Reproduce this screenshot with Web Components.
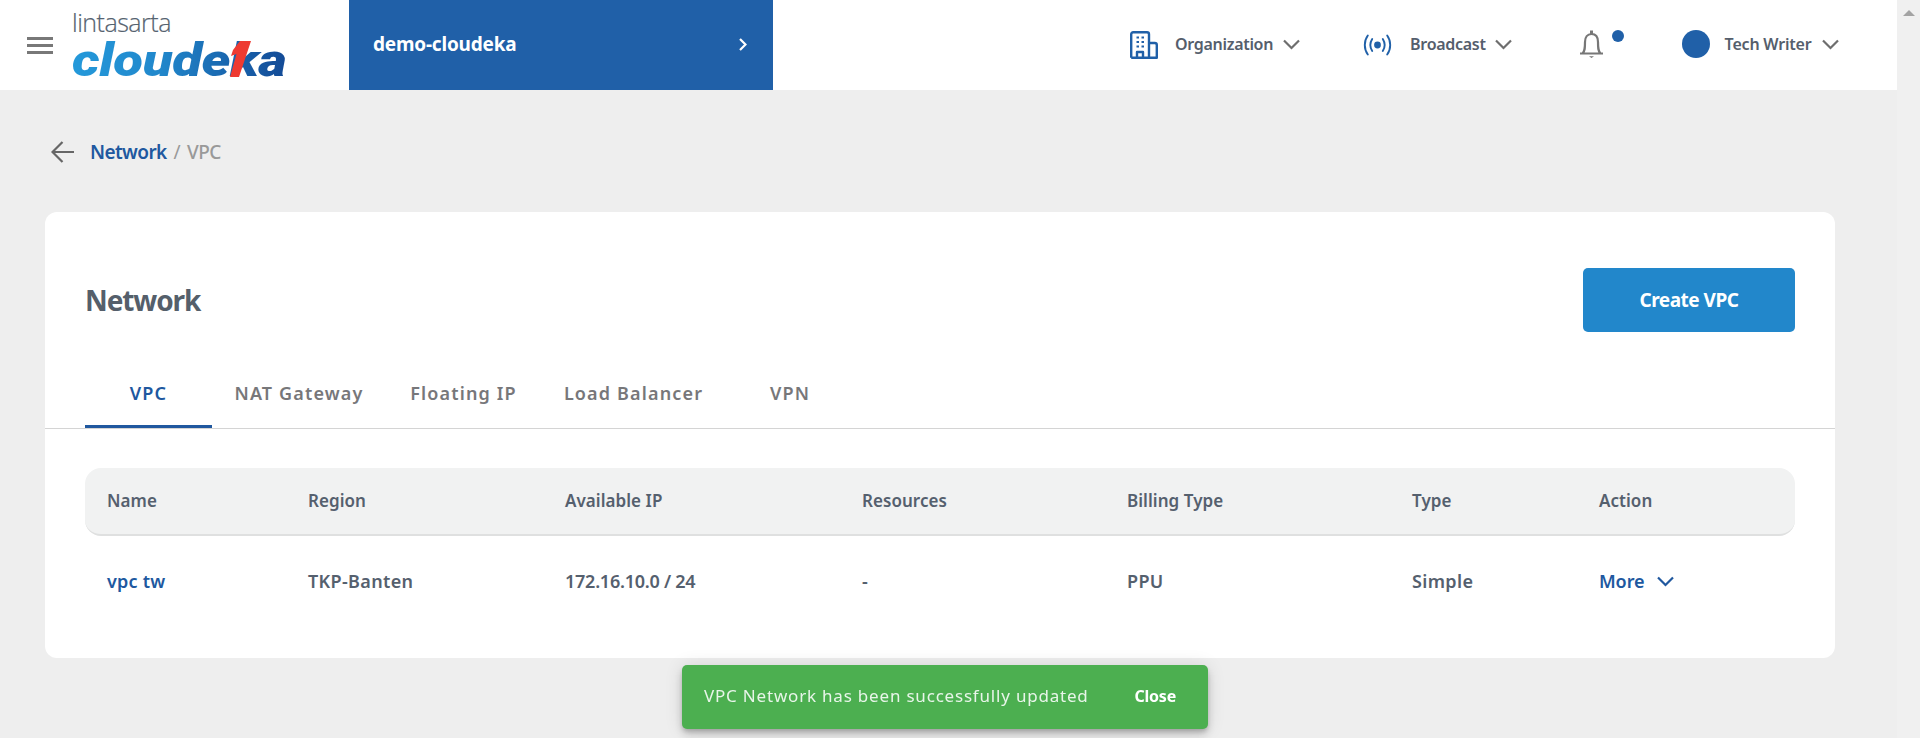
<!DOCTYPE html>
<html>
<head>
<meta charset="utf-8">
<title>Network - VPC</title>
<style>
  html, body { margin: 0; height: 100%; overflow: hidden; background: #eeeeee; }
  body { font-family: "Noto Sans", "Open Sans", sans-serif; color: #556066; }
</style>
</head>
<body>
<app-shell>
  <top-bar></top-bar>
  <bread-crumb></bread-crumb>
  <network-card></network-card>
</app-shell>
<toast-bar>VPC Network has been successfully updated</toast-bar>

<script>
// iconos compartidos
const chevron = (c) => `<svg width="17" height="11" viewBox="0 0 17 11" fill="none" stroke="${c}" stroke-width="2.200"><path d="M1 1.500 8.500 9 16 1.500"/></svg>`;

class AppShell extends HTMLElement {
  constructor() {
    super();
    this.attachShadow({mode: 'open'}).innerHTML = `
      <style>
        :host { display: flex; height: 738px; }
        .page { width: 1897px; flex: none; }
        .bar { flex: 1; background: #f0f0f0; display: flex; justify-content: center; padding-top: 10px; box-sizing: border-box; }
        .up { width: 0; height: 0; border: 6px solid transparent; border-top: 0; border-bottom: 6px solid #a3a3a3; }
      </style>
      <div class="page"><slot></slot></div>
      <div class="bar"><div class="up"></div></div>`;
  }
}

class TopBar extends HTMLElement {
  constructor() {
    super();
    this.attachShadow({mode: 'open'}).innerHTML = `
      <style>
        :host { display: flex; height: 90px; background: #fff; align-items: center; font-family: "Noto Sans", sans-serif; }
        .burger { width: 26px; height: 17px; margin-left: 27px; display: flex; flex-direction: column; justify-content: space-between; }
        .burger i { height: 3px; background: #787878; display: block; }
        .logo { width: 276px; margin-left: 20px; height: 90px; box-sizing: border-box; padding-top: 9px; position: relative; overflow: hidden; }
        .lin { font: 300 25px/26px "Open Sans", sans-serif; color: #55626f; letter-spacing: -0.5px; display: block; margin-left: -1px; -webkit-text-stroke: 0.2px #55626f; }
        .cl { font: italic 900 47px/40px Roboto, sans-serif; letter-spacing: -0.4px; display: block; width: 184px; height: 40px; margin: 5px 0 0 -1px; white-space: nowrap; transform: scaleX(1.165); transform-origin: 0 0;
          background: linear-gradient(90deg, #2499da 0, #2188cc 40%, #134a96 100%); -webkit-background-clip: text; background-clip: text; color: transparent; }
        .one { position: absolute; left: 157px; top: 41px; }
        .project { width: 424px; height: 90px; background: #2060a8; color: #fff; font-weight: 700; font-size: 19px; letter-spacing: -0.2px; display: flex; align-items: center; justify-content: space-between; padding: 0 26px 2px 24px; box-sizing: border-box; }
        .right { flex: 1; display: flex; align-items: center; font-size: 16px; font-weight: 600; color: #555e6c; letter-spacing: -0.3px; }
        .right span { white-space: nowrap; margin-bottom: 2px; }
        .org { margin-left: 357px; display: flex; align-items: center; }
        .cast { margin-left: 63px; display: flex; align-items: center; }
        .bell { margin-left: 67px; display: flex; align-items: flex-start; margin-bottom: 2px; }
        .dot { width: 12px; height: 12px; border-radius: 50%; background: #2060a8; margin-left: 8px; }
        .user { margin-left: 58px; display: flex; align-items: center; }
        .ava { width: 28px; height: 28px; border-radius: 50%; background: #2060a8; margin-bottom: 2px; }
      </style>
      <div class="burger"><i></i><i></i><i></i></div>
      <div class="logo">
        <span class="lin">lintasarta</span>
        <span class="cl">cloudeka</span>
        <svg class="one" width="22" height="36" viewBox="0 0 22 36"><path d="M10 0H21L9 36H0L6.500 13 1 15 3 9Z" fill="#ee3a31"/></svg>
      </div>
      <div class="project"><span>demo-cloudeka</span>
        <svg width="8" height="13" viewBox="0 0 8 13" fill="none" stroke="#fff" stroke-width="2.200"><path d="M1 1 6.500 6.500 1 12"/></svg>
      </div>
      <div class="right">
        <div class="org">
          <svg width="28" height="28" viewBox="0 0 28 28" fill="none" stroke="#2060a8" stroke-width="2.400" stroke-linejoin="round"><path d="M1.200 26.800V3.200a2 2 0 0 1 2-2H17a2 2 0 0 1 2 2V26.800M1.200 26.800H26.800V14a2 2 0 0 0-2-2H19M7 26.800V21H13V26.800"/><path d="M6.500 6.500h2.500M11.500 6.500h2.500M6.500 11h2.500M11.500 11h2.500M6.500 15.500h2.500M11.500 15.500h2.500" stroke-width="2.200"/></svg>
          <span style="margin-left:17px">Organization</span>
          <span style="margin-left:10px;display:flex">${chevron('#6e6e6e')}</span>
        </div>
        <div class="cast">
          <svg width="29" height="22" viewBox="0 0 29 22" fill="none" stroke="#2060a8" stroke-width="1.900" stroke-linecap="round"><circle cx="14.500" cy="11" r="3.400" fill="#2060a8" stroke="none"/><path d="M9.200 5C7 8.500 7 13.500 9.200 17M19.800 5C22 8.500 22 13.500 19.800 17M4.800 1.500C.8 7 .8 15 4.800 20.500M24.200 1.500C28.200 7 28.200 15 24.200 20.500"/></svg>
          <span style="margin-left:18px">Broadcast</span>
          <span style="margin-left:9px;display:flex">${chevron('#6e6e6e')}</span>
        </div>
        <div class="bell">
          <svg width="25" height="28" viewBox="0 0 25 28" fill="none" stroke="#777" stroke-width="2.200"><path d="M1 23.500H24M3.500 23.500C6 21 6 18 6 12 6 7 8.500 4 12.500 4S19 7 19 12C19 18 19 21 21.500 23.500"/><path d="M12.500 .5V4" stroke-width="3"/><path d="M10 26.300H15L12.500 28Z" fill="#777" stroke="none"/></svg>
          <div class="dot"></div>
        </div>
        <div class="user">
          <div class="ava"></div>
          <span style="margin-left:15px;letter-spacing:-0.2px">Tech Writer</span>
          <span style="margin-left:10px;display:flex">${chevron('#6e6e6e')}</span>
        </div>
      </div>`;
  }
}

class BreadCrumb extends HTMLElement {
  constructor() {
    super();
    this.attachShadow({mode: 'open'}).innerHTML = `
      <style>
        :host { display: flex; align-items: center; height: 122px; box-sizing: border-box; padding: 2px 0 0 51px; font: 600 19px "Noto Sans", sans-serif; letter-spacing: -0.6px; }
        a { color: #20589f; margin-left: 16px; }
        .sep { color: #999; font-weight: 400; margin: 0 7px; }
        .cur { color: #999; font-weight: 500; }
      </style>
      <svg width="23" height="22" viewBox="0 0 23 22" fill="none" stroke="#666" stroke-width="2.200"><path d="M23 11H2M11.500 1 1.500 11 11.500 21"/></svg>
      <a>Network</a><span class="sep">/</span><span class="cur">VPC</span>`;
  }
}

class NetworkCard extends HTMLElement {
  constructor() {
    super();
    this.attachShadow({mode: 'open'}).innerHTML = `
      <style>
        :host { display: block; margin-left: 45px; width: 1790px; height: 446px; background: #fff; border-radius: 12px; font-family: "Noto Sans", sans-serif; }
        .head { display: flex; justify-content: space-between; align-items: center; padding: 56px 40px 0; height: 64px; }
        h1 { margin: 0; font-size: 28px; font-weight: 700; color: #555f6b; letter-spacing: -1.100px; }
        button { width: 212px; height: 64px; border: 0; border-radius: 5px; background: #2287cb; color: #fff; font: 700 19px "Noto Sans", sans-serif; letter-spacing: -0.5px; }
        .tabs { display: flex; margin-top: 30px; height: 66px; border-bottom: 1px solid #d4d4d4; padding-left: 40px; }
        .tab { height: 66px; display: flex; align-items: center; justify-content: center; box-sizing: border-box; padding-bottom: 5px; font-size: 18px; font-weight: 600; letter-spacing: 1.150px; color: #77777a; }
        .tab.on { color: #20589f; border-bottom: 3px solid #20589f; padding-bottom: 2px; }
        .rows { padding: 39px 40px 0; }
      </style>
      <div class="head"><h1>Network</h1><button>Create VPC</button></div>
      <div class="tabs">
        <div class="tab on" style="width:127px">VPC</div>
        <div class="tab" style="width:174px">NAT Gateway</div>
        <div class="tab" style="width:155px">Floating IP</div>
        <div class="tab" style="width:185px">Load Balancer</div>
        <div class="tab" style="width:128px">VPN</div>
      </div>
      <div class="rows">
        <vpc-table></vpc-table>
      </div>`;
  }
}

class VpcTable extends HTMLElement {
  constructor() {
    super();
    const cols = 'grid-template-columns: 201px 257px 297px 265px 285px 187px 1fr;';
    this.attachShadow({mode: 'open'}).innerHTML = `
      <style>
        :host { display: block; font: 600 18px "Noto Sans", sans-serif; color: #55606e; letter-spacing: 0.35px; }
        .row { display: grid; ${cols} padding-left: 22px; align-items: center; }
        .hd { height: 68px; background: #f1f2f2; border-radius: 16px; border-bottom: 2px solid #dfe0e0; box-sizing: border-box; font-size: 17px; letter-spacing: 0.05px; padding-bottom: 2px; }
        .bd { height: 90px; }
        .link { color: #20589f; }
        .vpc { letter-spacing: 0.2px; }
        .ip { letter-spacing: -0.25px; }
        .more { display: flex; align-items: center; gap: 13px; letter-spacing: -0.1px; }
      </style>
      <div class="row hd"><span>Name</span><span>Region</span><span>Available IP</span><span>Resources</span><span>Billing Type</span><span>Type</span><span>Action</span></div>
      <div class="row bd"><span class="link vpc">vpc tw</span><span>TKP-Banten</span><span class="ip">172.16.10.0 / 24</span><span>-</span><span>PPU</span><span>Simple</span>
        <span class="more link">More ${chevron('#20589f')}</span></div>`;
  }
}

class ToastBar extends HTMLElement {
  constructor() {
    super();
    this.attachShadow({mode: 'open'}).innerHTML = `
      <style>
        :host { position: fixed; left: 682px; top: 665px; width: 526px; height: 64px; background: #4caf50; border-radius: 5px; box-shadow: 0 3px 5px -1px rgba(0,0,0,.2), 0 6px 10px 0 rgba(0,0,0,.14), 0 1px 18px 0 rgba(0,0,0,.12); display: flex; align-items: center; justify-content: space-between; padding: 0 32px 2px 22px; box-sizing: border-box; color: #e8f5e9; font: 400 17px "Noto Sans", sans-serif; letter-spacing: 0.8px; }
        span { padding-bottom: 2px; }
        b { color: #fff; font-weight: 700; font-size: 16px; letter-spacing: -0.2px; }
      </style>
      <span><slot></slot></span><b>Close</b>`;
  }
}

customElements.define('app-shell', AppShell);
customElements.define('top-bar', TopBar);
customElements.define('bread-crumb', BreadCrumb);
customElements.define('network-card', NetworkCard);
customElements.define('vpc-table', VpcTable);
customElements.define('toast-bar', ToastBar);
</script>
</body>
</html>
